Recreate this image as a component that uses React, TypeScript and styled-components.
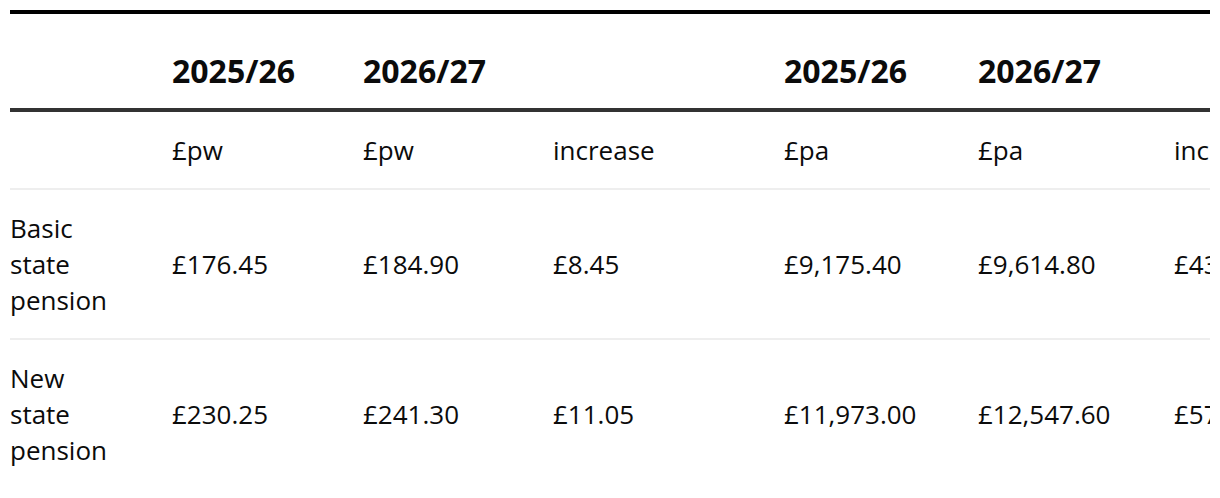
import React from "react";
import styled, { createGlobalStyle } from "styled-components";

const Global = createGlobalStyle`
  html, body { margin: 0; padding: 0; background: #fff; }
  body { font-family: "Open Sans", "Liberation Sans", sans-serif; color: #0b0b0b; }
`;

const Wrap = styled.div`
  margin: 10px;
  width: 1200px;
  overflow: hidden;
`;

const Table = styled.table`
  border-collapse: collapse;
  table-layout: fixed;
  width: 1400px;
  border-top: 4px solid #000;
`;

const HeadRow = styled.tr`
  border-bottom: 4px solid #333;
`;

const Row = styled.tr<{ $last?: boolean }>`
  border-bottom: ${(p) => (p.$last ? "none" : "2px solid #eee")};
`;

const Th = styled.th`
  text-align: left;
  vertical-align: bottom;
  font-size: 32px;
  font-weight: 700;
  line-height: 36px;
  padding: 39px 10px 19px 0;
  white-space: nowrap;
`;

const Td = styled.td`
  text-align: left;
  vertical-align: middle;
  font-size: 26px;
  font-weight: 400;
  line-height: 36px;
  padding: 20px 10px 20px 0;
  white-space: nowrap;
`;

const Label = styled(Td)`
  white-space: normal;
  padding-right: 50px;
`;

const widths = [162, 191, 190, 231, 194, 196, 236];

const rows = [
  ["Basic state pension", "£176.45", "£184.90", "£8.45", "£9,175.40", "£9,614.80", "£439.40"],
  ["New state pension", "£230.25", "£241.30", "£11.05", "£11,973.00", "£12,547.60", "£574.60"],
];

export default function App() {
  return (
    <>
      <Global />
      <Wrap>
        <Table>
          <colgroup>
            {widths.map((w, i) => (
              <col key={i} style={{ width: w }} />
            ))}
          </colgroup>
          <thead>
            <HeadRow>
              <Th />
              <Th>2025/26</Th>
              <Th>2026/27</Th>
              <Th />
              <Th>2025/26</Th>
              <Th>2026/27</Th>
              <Th />
            </HeadRow>
          </thead>
          <tbody>
            <Row>
              <Td />
              <Td>£pw</Td>
              <Td>£pw</Td>
              <Td>increase</Td>
              <Td>£pa</Td>
              <Td>£pa</Td>
              <Td>increase</Td>
            </Row>
            {rows.map((r, i) => (
              <Row key={i} $last={i === rows.length - 1}>
                <Label>{r[0]}</Label>
                {r.slice(1).map((c, j) => (
                  <Td key={j}>{c}</Td>
                ))}
              </Row>
            ))}
          </tbody>
        </Table>
      </Wrap>
    </>
  );
}
